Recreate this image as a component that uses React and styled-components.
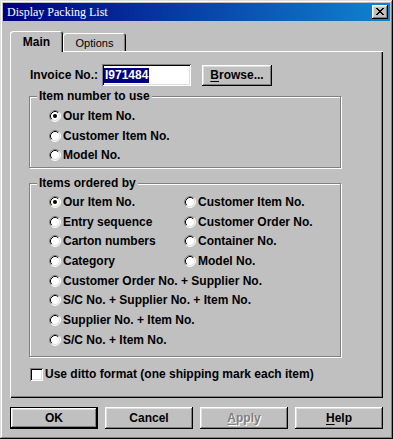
import React from "react";
import styled, { createGlobalStyle } from "styled-components";

const Global = createGlobalStyle`
  html, body { margin: 0; padding: 0; background: #c0c0c0; }
  body { font-family: "Liberation Sans", Arial, sans-serif; }
  * { box-sizing: border-box; }
`;

const Window = styled.div`
  width: 393px;
  height: 439px;
  background: #c0c0c0;
  padding: 3px;
  display: flex;
  flex-direction: column;
  box-shadow: inset -1px -1px #000, inset 1px 1px #dfdfdf,
    inset -2px -2px #808080, inset 2px 2px #fff;
`;

const TitleBar = styled.div`
  height: 18px;
  display: flex;
  align-items: center;
  justify-content: space-between;
  padding: 0 2px 0 4px;
  background: linear-gradient(90deg, #000080 0%, #1084d0 100%);
`;

const TitleText = styled.span`
  font-family: "Liberation Serif", "Times New Roman", serif;
  font-size: 12px;
  color: #fff;
  line-height: 18px;
`;

const CloseButton = styled.div`
  width: 16px;
  height: 14px;
  background: #c0c0c0;
  display: flex;
  align-items: center;
  justify-content: center;
  padding-bottom: 1px;
  box-shadow: inset -1px -1px #000, inset 1px 1px #fff,
    inset -2px -2px #808080, inset 2px 2px #dfdfdf;
`;

const Body = styled.div`
  flex: 1;
  display: flex;
  flex-direction: column;
  padding: 10px 7px 7px 7px;
`;

const TabStrip = styled.div`
  height: 20px;
  display: flex;
  align-items: flex-end;
`;

const Tab = styled.div`
  position: relative;
  z-index: ${(p) => (p.$active ? 2 : 1)};
  width: ${(p) => p.$w}px;
  height: ${(p) => (p.$active ? 21 : 18)}px;
  margin-bottom: ${(p) => (p.$active ? -1 : 0)}px;
  background: #c0c0c0;
  border-radius: 3px 3px 0 0;
  display: flex;
  align-items: center;
  justify-content: center;
  padding-top: ${(p) => (p.$active ? 0 : 1)}px;
  font-size: ${(p) => (p.$active ? 12 : 11)}px;
  font-weight: ${(p) => (p.$active ? 700 : 400)};
  color: #000;
  box-shadow: inset 1px 1px #fff, inset -1px 0 #000, inset -2px 0 #808080;
`;

const Panel = styled.div`
  flex: 1;
  display: flex;
  flex-direction: column;
  padding: 13px 0 0 19px;
  box-shadow: inset 1px 1px #fff, inset -1px -1px #000, inset -2px -2px #808080;
`;

const Label = styled.span`
  font-size: 12px;
  font-weight: 700;
  color: #000;
  white-space: nowrap;
`;

const InvoiceRow = styled.div`
  height: 22px;
  display: flex;
  align-items: center;
  padding-left: 1px;
`;

const TextBox = styled.div`
  width: 89px;
  height: 22px;
  margin-left: 4px;
  background: #fff;
  display: flex;
  align-items: center;
  padding: 0 2px;
  box-shadow: inset 1px 1px #808080, inset -1px -1px #fff,
    inset 2px 2px #000, inset -2px -2px #dfdfdf;
`;

const Selected = styled.span`
  background: #000080;
  color: #fff;
  font-size: 12px;
  font-weight: 700;
  line-height: 15px;
  padding: 0 1px;
`;

const Button = styled.div`
  width: ${(p) => p.$w}px;
  height: ${(p) => p.$h}px;
  margin-left: ${(p) => p.$ml || 0}px;
  display: flex;
  align-items: center;
  justify-content: center;
  font-size: 12px;
  font-weight: 700;
  background: #c0c0c0;
  color: ${(p) => (p.$disabled ? "#808080" : "#000")};
  text-shadow: ${(p) => (p.$disabled ? "1px 1px #fff" : "none")};
  border: ${(p) => (p.$default ? "1px solid #000" : "none")};
  box-shadow: inset -1px -1px #000, inset 1px 1px #fff,
    inset -2px -2px #808080, inset 2px 2px #dfdfdf;
  u { text-decoration: underline; text-underline-offset: 2px; }
`;

const Group = styled.div`
  position: relative;
  width: 312px;
  margin-top: ${(p) => p.$mt}px;
  padding: ${(p) => p.$pad};
  border: 1px solid #808080;
  box-shadow: inset 1px 1px #fff, 1px 1px #fff;
`;

const Legend = styled.span`
  position: absolute;
  top: -8px;
  left: 7px;
  padding: 0 2px;
  background: #c0c0c0;
  font-size: 12px;
  font-weight: 700;
  line-height: 14px;
`;

const OptionGrid = styled.div`
  display: grid;
  grid-template-columns: ${(p) => p.$cols};
  grid-auto-rows: 19.7px;
`;

const OptionRow = styled.label`
  display: flex;
  align-items: center;
  gap: 2px;
  grid-column: ${(p) => (p.$span ? "1 / -1" : "auto")};
`;

const CheckRow = styled.div`
  display: flex;
  align-items: center;
  gap: 2px;
  height: 13px;
  margin-top: 11px;
  padding-left: 1px;
`;

const CheckBox = styled.span`
  width: 13px;
  height: 13px;
  background: #fff;
  box-shadow: inset 1px 1px #808080, inset -1px -1px #fff,
    inset 2px 2px #000, inset -2px -2px #dfdfdf;
`;

const ButtonRow = styled.div`
  height: 22px;
  margin-top: 9px;
  display: flex;
  gap: 7px;
`;

const Radio = ({ checked }) => (
  <svg width="12" height="12" viewBox="0 0 12 12" style={{ flex: "none" }}>
    <circle cx="6" cy="6" r="5" fill="#fff" />
    <path d="M2.11 9.89 A5.5 5.5 0 0 1 9.89 2.11" fill="none" stroke="#808080" />
    <path d="M9.89 2.11 A5.5 5.5 0 0 1 2.11 9.89" fill="none" stroke="#fff" />
    <path d="M2.82 9.18 A4.5 4.5 0 0 1 9.18 2.82" fill="none" stroke="#000" />
    <path d="M9.18 2.82 A4.5 4.5 0 0 1 2.82 9.18" fill="none" stroke="#dfdfdf" />
    {checked && <circle cx="6" cy="6" r="2" fill="#000" />}
  </svg>
);

const X_BITMAP = [
  "##....##",
  ".##..##.",
  "..####..",
  "...##...",
  "..####..",
  ".##..##.",
  "##....##",
];

const CloseGlyph = () => {
  let d = "";
  X_BITMAP.forEach((row, y) =>
    row.split("").forEach((c, x) => {
      if (c === "#") d += `M${x} ${y}h1v1h-1z`;
    })
  );
  return (
    <svg width="8" height="7" viewBox="0 0 8 7" shapeRendering="crispEdges">
      <path d={d} fill="#000" />
    </svg>
  );
};

const Option = ({ label, checked, span }) => (
  <OptionRow $span={span}>
    <Radio checked={checked} />
    <Label>{label}</Label>
  </OptionRow>
);

export default function App() {
  return (
    <>
      <Global />
      <Window>
        <TitleBar>
          <TitleText>Display Packing List</TitleText>
          <CloseButton>
            <CloseGlyph />
          </CloseButton>
        </TitleBar>
        <Body>
          <TabStrip>
            <Tab $active $w={53}>Main</Tab>
            <Tab $w={63}>Options</Tab>
          </TabStrip>
          <Panel>
            <InvoiceRow>
              <Label>Invoice No.:</Label>
              <TextBox>
                <Selected>I971484</Selected>
              </TextBox>
              <Button $w={70} $h={21} $ml={11}>
                <span>
                  <u>B</u>rowse...
                </span>
              </Button>
            </InvoiceRow>

            <Group $mt={10} $pad="9px 0 2px 19px">
              <Legend>Item number to use</Legend>
              <OptionGrid $cols="1fr">
                <Option label="Our Item No." checked />
                <Option label="Customer Item No." />
                <Option label="Model No." />
              </OptionGrid>
            </Group>

            <Group $mt={15} $pad="8px 0 6px 19px">
              <Legend>Items ordered by</Legend>
              <OptionGrid $cols="135px 1fr">
                <Option label="Our Item No." checked />
                <Option label="Customer Item No." />
                <Option label="Entry sequence" />
                <Option label="Customer Order No." />
                <Option label="Carton numbers" />
                <Option label="Container No." />
                <Option label="Category" />
                <Option label="Model No." />
                <Option label="Customer Order No. + Supplier No." span />
                <Option label="S/C No. + Supplier No. + Item No." span />
                <Option label="Supplier No. + Item No." span />
                <Option label="S/C No. + Item No." span />
              </OptionGrid>
            </Group>

            <CheckRow>
              <CheckBox />
              <Label>Use ditto format (one shipping mark each item)</Label>
            </CheckRow>
          </Panel>
          <ButtonRow>
            <Button $w={88} $h={22} $default>OK</Button>
            <Button $w={88} $h={22}>Cancel</Button>
            <Button $w={88} $h={22} $disabled>
              <span>
                <u>A</u>pply
              </span>
            </Button>
            <Button $w={88} $h={22}>
              <span>
                <u>H</u>elp
              </span>
            </Button>
          </ButtonRow>
        </Body>
      </Window>
    </>
  );
}
